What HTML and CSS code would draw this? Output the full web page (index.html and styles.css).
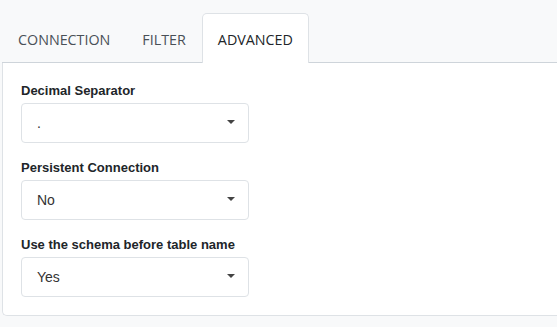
FILE: index.html
```html
<!DOCTYPE html>
<html lang="en">
<head>
    <meta charset="UTF-8">
    <meta name="viewport" content="width=device-width, initial-scale=1.0">
    <title>Connection Settings</title>
    <link rel="stylesheet" href="styles.css">
</head>
<body>
    <div class="tabs">
        <div class="tab">CONNECTION</div>
        <div class="tab">FILTER</div>
        <div class="tab active">ADVANCED</div>
    </div>
    <div class="panel">
        <div class="field">
            <label>Decimal Separator</label>
            <div class="select"><span>.</span><span class="caret"></span></div>
        </div>
        <div class="field">
            <label>Persistent Connection</label>
            <div class="select"><span>No</span><span class="caret"></span></div>
        </div>
        <div class="field">
            <label>Use the schema before table name</label>
            <div class="select"><span>Yes</span><span class="caret"></span></div>
        </div>
    </div>
</body>
</html>
```

FILE: styles.css
```css
body {
    margin: 0;
    padding: 13px 0 0 2px;
    background-color: #f8f9fa;
    font-family: "Liberation Sans", Arial, sans-serif;
    color: #212529;
}
.tabs {
    display: flex;
    border-bottom: 1px solid #ced4da;
    height: 49px;
}
.tab {
    padding: 2px 15px 0 15px;
    font-family: "Open Sans", sans-serif;
    font-size: 14.3px;
    color: #495057;
    display: flex;
    align-items: center;
    border: 1px solid transparent;
    border-bottom: none;
    margin-bottom: -1px;
}
.tab.active {
    background-color: #fff;
    border-color: #dee2e6;
    border-radius: 5px 5px 0 0;
    color: #212529;
}
.panel {
    background-color: #fff;
    border: 1px solid #dee2e6;
    border-top: none;
    border-right: none;
    border-radius: 0 0 0 5px;
    padding: 20px 18px 18px 18px;
}
.field {
    margin-bottom: 17px;
}
.field:last-child {
    margin-bottom: 0;
}
.field label {
    display: block;
    font-size: 13px;
    font-weight: bold;
    line-height: 16px;
    margin-bottom: 4px;
}
.select {
    width: 228px;
    height: 40px;
    box-sizing: border-box;
    border: 1px solid #dee2e6;
    border-radius: 4px;
    display: flex;
    align-items: center;
    justify-content: space-between;
    padding: 0 13px 0 15px;
    font-size: 14px;
    color: #333;
}
.caret {
    width: 0;
    height: 0;
    border-left: 4px solid transparent;
    border-right: 4px solid transparent;
    border-top: 4px solid #444;
    margin-top: -3px;
}
```
